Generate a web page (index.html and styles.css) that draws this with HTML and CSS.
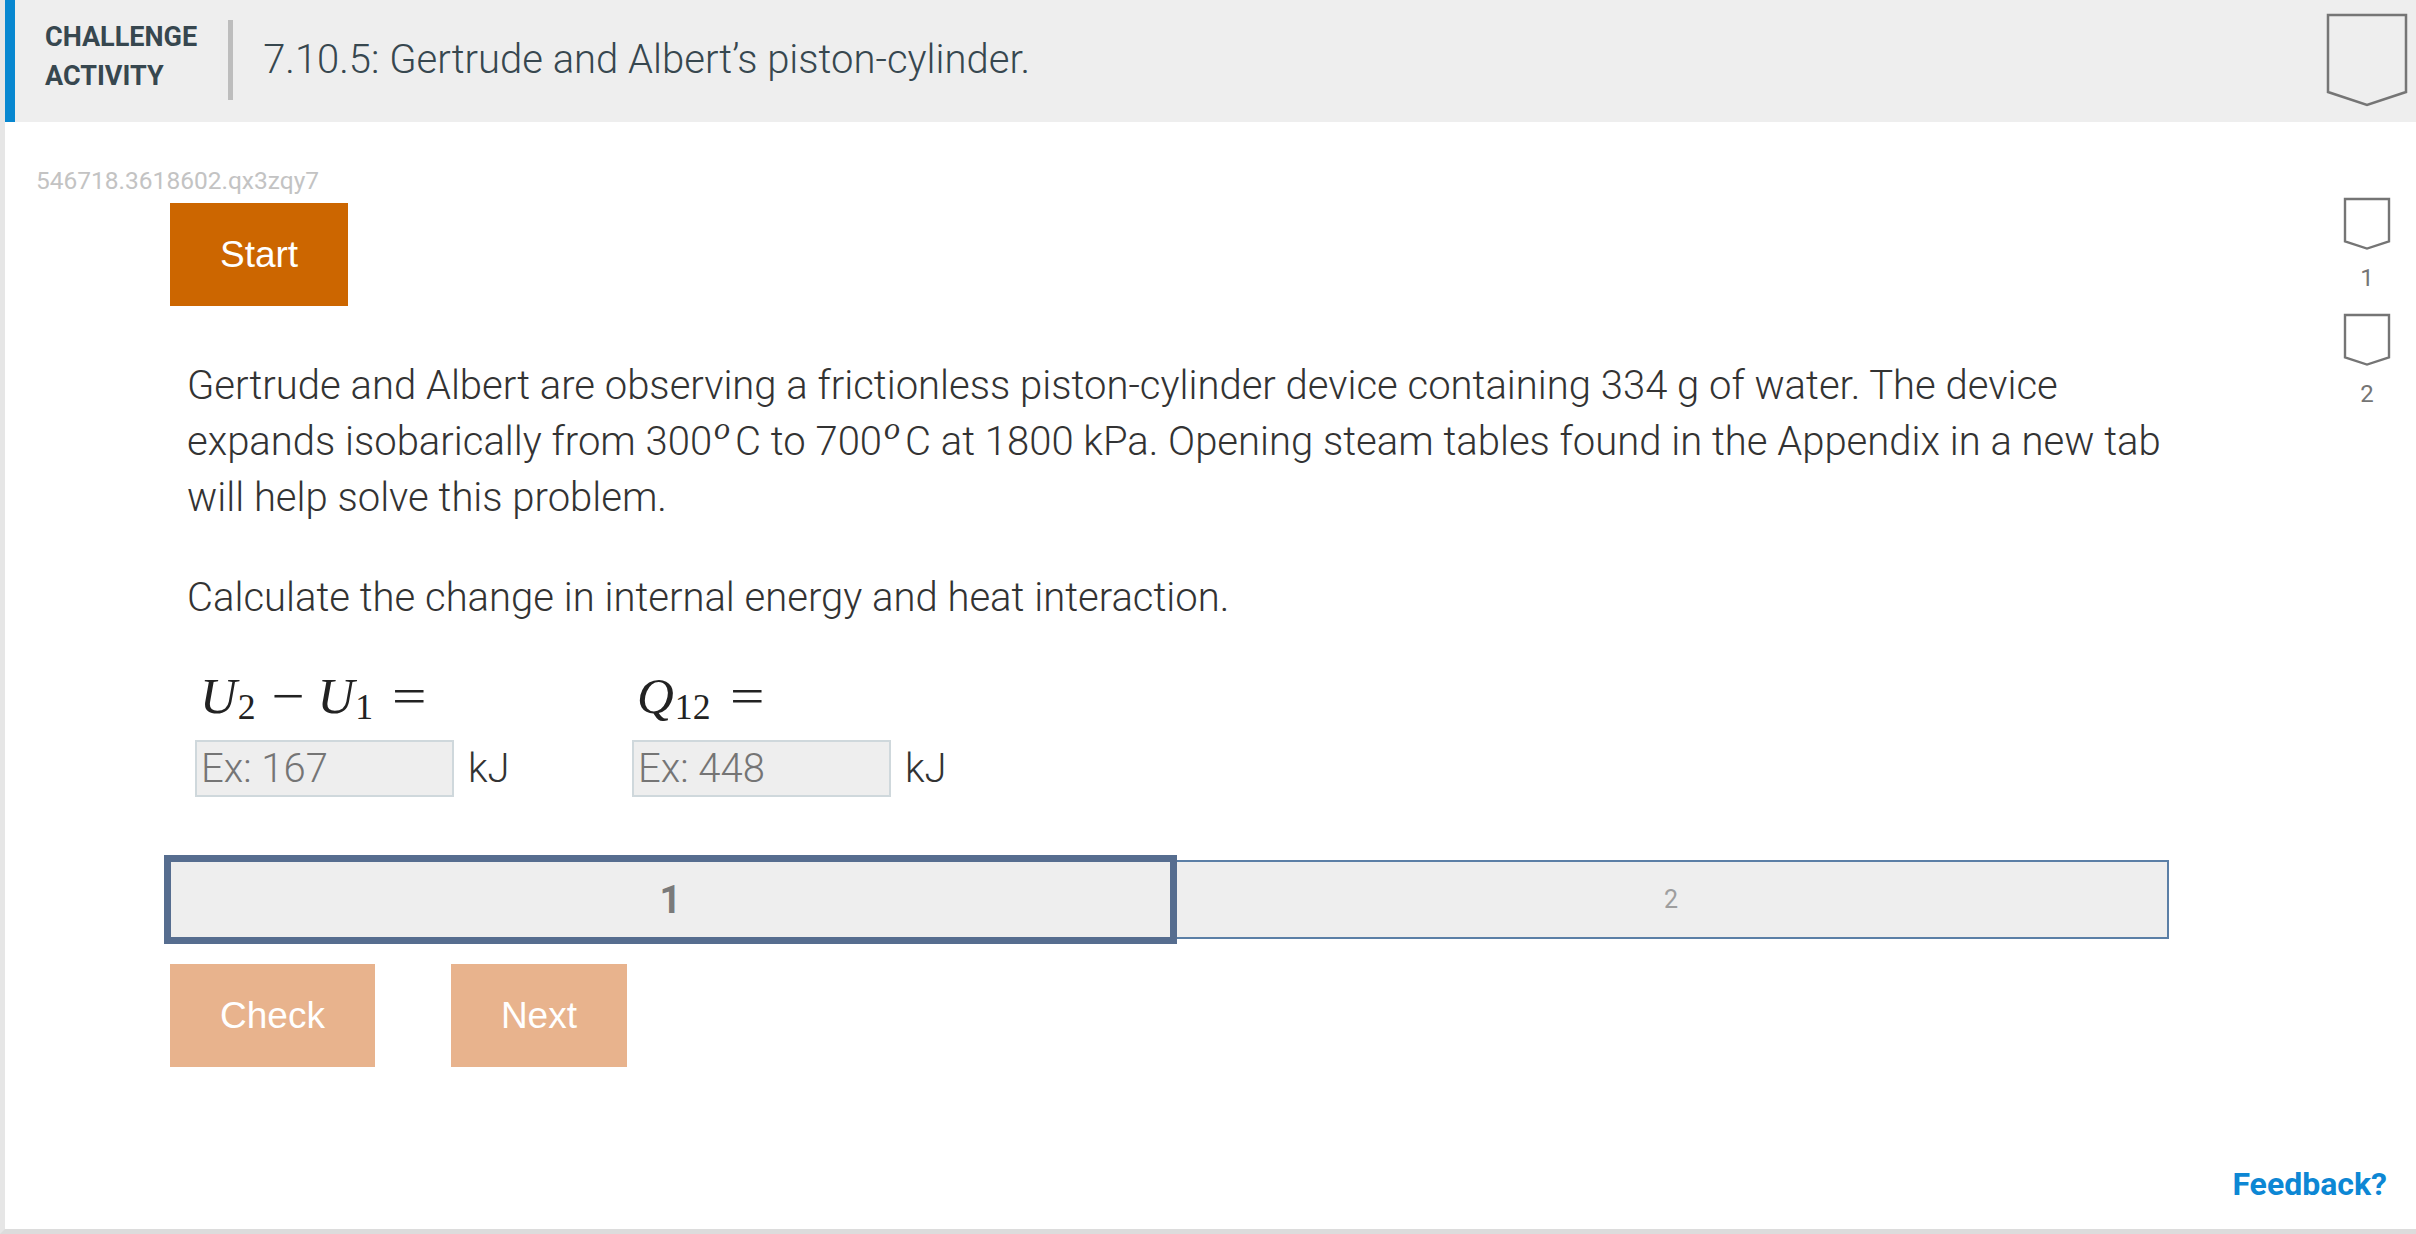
FILE: index.html
```html
<!DOCTYPE html>
<html lang="en">
<head>
<meta charset="utf-8">
<title>7.10.5: Gertrude and Albert’s piston-cylinder.</title>
<link rel="stylesheet" href="styles.css">
</head>
<body>
<div class="activity">
  <header class="act-header">
    <div class="act-label">CHALLENGE<br>ACTIVITY</div>
    <div class="act-divider"></div>
    <h1 class="act-title">7.10.5: Gertrude and Albert’s piston-cylinder.</h1>
    <svg class="badge-big" width="82" height="94" viewBox="0 0 82 94" aria-hidden="true"><path d="M2 2H80V79L41 92L2 79Z" fill="none" stroke="#757575" stroke-width="2.5"/></svg>
  </header>
  <div class="act-body">
    <div class="act-main">
      <div class="ref-id">546718.3618602.qx3zqy7</div>
      <div class="content">
        <button class="btn btn-start">Start</button>
        <p class="prompt">Gertrude and Albert are observing a frictionless piston-cylinder device containing 334 g of water. The device expands isobarically from 300<sup class="deg">o</sup>C to 700<sup class="deg">o</sup>C at 1800 kPa. Opening steam tables found in the Appendix in a new tab will help solve this problem.</p>
        <p class="prompt instr">Calculate the change in internal energy and heat interaction.</p>
        <div class="answers">
          <div class="answer">
            <div class="math"><i>U</i><sub>2</sub><span class="op">−</span><i>U</i><sub>1</sub><span class="rel">=</span></div>
            <div class="field"><input class="ans-input" type="text" placeholder="Ex: 167"><span class="unit">kJ</span></div>
          </div>
          <div class="answer">
            <div class="math"><i>Q</i><sub>12</sub><span class="rel">=</span></div>
            <div class="field"><input class="ans-input" type="text" placeholder="Ex: 448"><span class="unit">kJ</span></div>
          </div>
        </div>
        <div class="levels-bar">
          <div class="lvl lvl-active">1</div>
          <div class="lvl lvl-next">2</div>
        </div>
        <div class="actions">
          <button class="btn btn-disabled">Check</button>
          <button class="btn btn-disabled">Next</button>
        </div>
      </div>
    </div>
    <aside class="levels">
      <div class="level">
        <svg width="48" height="54" viewBox="0 0 48 54" aria-hidden="true"><path d="M2 2H46V44.3L24 51.6L2 44.3Z" fill="none" stroke="#757575" stroke-width="2.4"/></svg>
        <span class="level-num">1</span>
      </div>
      <div class="level level-2">
        <svg width="48" height="54" viewBox="0 0 48 54" aria-hidden="true"><path d="M2 2H46V44.3L24 51.6L2 44.3Z" fill="none" stroke="#757575" stroke-width="2.4"/></svg>
        <span class="level-num">2</span>
      </div>
    </aside>
  </div>
  <footer class="act-footer"><a class="feedback" href="#">Feedback?</a></footer>
</div>
</body>
</html>
```
FILE: styles.css
```css
html, body {
  margin: 0;
  padding: 0;
  background: #fff;
}
body {
  font-family: Roboto, "Liberation Sans", Arial, sans-serif;
}
.activity {
  box-sizing: border-box;
  height: 1234px;
  border-left: 5px solid #e6e6e6;
  border-bottom: 5px solid #dcdcdc;
  display: flex;
  flex-direction: column;
}
.act-header {
  box-sizing: border-box;
  display: flex;
  align-items: center;
  height: 122px;
  background: #eeeeee;
  border-left: 10px solid #0787d0;
  padding: 0 0 3px 30px;
}
.act-label {
  font-weight: 700;
  font-size: 27px;
  line-height: 39px;
  color: #37474f;
  margin-bottom: 5px;
}
.act-divider {
  width: 5px;
  height: 80px;
  background: #bdbdbd;
  margin: 0 30px 0 31px;
}
.act-title {
  flex: 1;
  margin: 0;
  font-family: "Roboto Light", Roboto, sans-serif;
  font-size: 40px;
  line-height: 48px;
  font-weight: 300;
  color: #37474f;
}
.badge-big {
  align-self: flex-start;
  margin: 13px 8px 0 0;
}
.act-body {
  display: flex;
}
.act-main {
  flex: 1;
  padding-left: 31px;
}
.ref-id {
  margin-top: 45px;
  font-size: 24.5px;
  line-height: 28px;
  color: #c3c3c3;
}
.content {
  margin-left: 134px;
  width: 2010px;
}
.btn {
  display: block;
  box-sizing: border-box;
  height: 103px;
  padding: 0 50px;
  margin: 0;
  border: 0;
  border-radius: 0;
  background: #cc6600;
  color: #fff;
  font-family: "Liberation Sans", Arial, sans-serif;
  font-size: 37px;
}
.btn-start {
  margin-top: 8px;
}
.btn-disabled {
  background: #e8b38d;
}
.prompt {
  margin: 52px 0 0;
  padding-left: 17px;
  font-family: "Roboto Light", Roboto, sans-serif;
  font-size: 40px;
  line-height: 56px;
  font-weight: 300;
  color: #333;
}
.instr {
  margin-top: 44px;
}
.deg {
  font-family: "Liberation Serif", serif;
  font-style: italic;
  font-size: 0.8em;
  line-height: 0;
  vertical-align: 0.5em;
  margin: 0 5px 0 2px;
}
.answers {
  display: flex;
  margin-top: 40px;
  padding-left: 25px;
}
.answer {
  width: 437px;
}
.math {
  font-family: "Liberation Serif", serif;
  font-size: 51px;
  line-height: 60px;
  color: #222;
  padding-left: 5px;
  white-space: nowrap;
}
.math i {
  font-style: italic;
}
.math sub {
  font-size: 0.7em;
  line-height: 0;
  vertical-align: -0.16em;
  margin-left: 1px;
}
.op {
  display: inline-block;
  transform: scaleX(1.15);
  margin: 0 15px 0 18px;
}
.rel {
  display: inline-block;
  transform: scaleX(1.2);
  margin-left: 22px;
}
.field {
  display: flex;
  align-items: baseline;
  margin-top: 14px;
}
.ans-input {
  box-sizing: border-box;
  width: 259px;
  height: 57px;
  margin: 0;
  padding: 0 4px;
  border: 2px solid #cfd8dc;
  border-radius: 0;
  background: #eeeeee;
  font-family: "Roboto Light", Roboto, sans-serif;
  font-size: 40px;
  font-weight: 300;
  color: #333;
}
.ans-input::placeholder {
  color: #757575;
  opacity: 1;
}
.unit {
  margin-left: 14px;
  font-family: "Roboto Light", Roboto, sans-serif;
  font-size: 40px;
  font-weight: 300;
  color: #333;
}
.levels-bar {
  display: flex;
  align-items: center;
  margin: 58px 0 0 -6px;
}
.lvl {
  box-sizing: border-box;
  display: flex;
  align-items: center;
  justify-content: center;
  background: #eeeeee;
}
.lvl-active {
  position: relative;
  z-index: 1;
  width: 1013px;
  height: 89px;
  border: 7px solid #566d8f;
  font-size: 38px;
  font-weight: 700;
  color: #7a7a7a;
}
.lvl-next {
  width: 996px;
  height: 79px;
  margin-left: -4px;
  border: 2px solid #5b7fa6;
  font-size: 25px;
  color: #9e9e9e;
}
.actions {
  display: flex;
  gap: 76px;
  margin-top: 20px;
}
.levels {
  width: 98px;
  display: flex;
  flex-direction: column;
  align-items: center;
  padding-top: 75px;
}
.level {
  display: flex;
  flex-direction: column;
  align-items: center;
}
.level svg {
  display: block;
}
.level-2 {
  margin-top: 21px;
}
.level-num {
  margin-top: 13px;
  font-size: 24px;
  line-height: 28px;
  color: #757575;
}
.act-footer {
  margin-top: auto;
  text-align: right;
  padding: 0 29px 27px 0;
}
.feedback {
  font-size: 32px;
  line-height: 36px;
  font-weight: 700;
  color: #0d87d4;
  text-decoration: none;
}
```
